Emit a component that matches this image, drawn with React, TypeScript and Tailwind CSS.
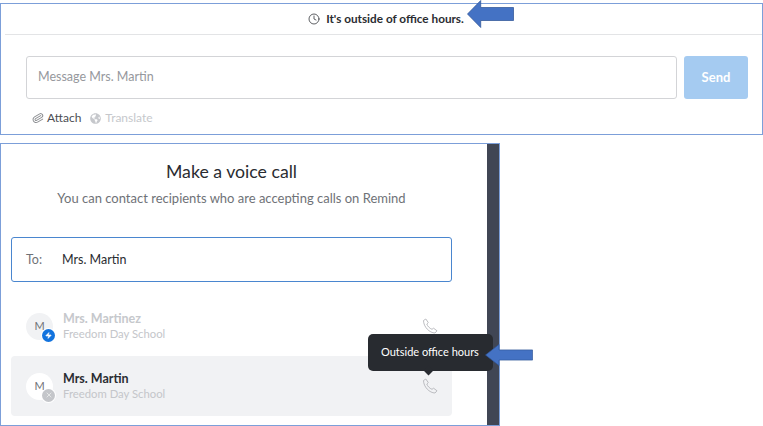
import { Clock, Paperclip, Zap, X } from "lucide-react";
import { FaGlobeAmericas } from "react-icons/fa";

function BlueArrow({ className }: { className: string }) {
  return (
    <svg className={className} viewBox="0 0 48 28" preserveAspectRatio="none" fill="#4472c4" stroke="#2f5597" strokeWidth="0.75">
      <path d="M0.5 14 L14 0.5 V7.5 H47.5 V20.5 H14 V27.5 Z" />
    </svg>
  );
}

function Handset() {
  return (
    <svg width="16" height="16" viewBox="0 0 16 16" fill="none" stroke="#b4b6ba" strokeWidth="0.9" strokeLinejoin="round">
      <path d="M1.5 2.5 L3.8 1 L6.3 4.6 L4.8 6 C5.4 8 7.6 10.4 10 11.3 L11.6 10.2 L15 12.8 L13 15 C7.6 15 1.5 8.8 1.5 2.5 Z" />
    </svg>
  );
}

function Avatar({ online, hovered }: { online?: boolean; hovered?: boolean }) {
  return (
    <div className={`relative flex h-[27px] w-[27px] shrink-0 items-center justify-center rounded-full text-[11px] text-[#6f7277] ${hovered ? "bg-white" : "bg-[#f1f2f4]"}`}>
      M
      {online ? (
        <span className="absolute -right-[2px] -bottom-[2px] flex h-[13px] w-[13px] items-center justify-center rounded-full bg-[#1273de] ring-1 ring-white">
          <Zap size={7} fill="white" stroke="white" />
        </span>
      ) : (
        <span className="absolute -right-[2px] -bottom-[2px] flex h-[13px] w-[13px] items-center justify-center rounded-full bg-[#c4c6ca] ring-1 ring-white">
          <X size={8} stroke="#eceded" strokeWidth={2.5} />
        </span>
      )}
    </div>
  );
}

function Recipient({ name, dim, active }: { name: string; dim?: boolean; active?: boolean }) {
  return (
    <div className={`flex h-[60px] items-center rounded-[4px] pr-[14px] pl-[15px] ${active ? "bg-[#f1f2f4]" : ""}`}>
      <Avatar online={dim} hovered={active} />
      <div className="ml-[10px] flex-1">
        <div className={`text-[12.5px] leading-[16px] font-bold ${dim ? "text-[#c6c8cc]" : "text-[#2a2c31]"}`}>{name}</div>
        <div className="text-[11.3px] leading-[14px] text-[#c4c6ca]">Freedom Day School</div>
      </div>
      <Handset />
    </div>
  );
}

export default function App() {
  return (
    <div className="relative h-[426px] w-[763px] overflow-hidden bg-white pt-[3px] font-['Lato',sans-serif] text-[#2a2c31]">
      <section className="h-[132px] border border-[#7c9fd9]">
        <div className="ml-[4px] flex h-[31px] items-center justify-center gap-[6px] border-b border-[#e3e4e6] pl-[5px] text-[11.75px] font-bold">
          <Clock size={12} strokeWidth={1.5} />
          <span>It's outside of office hours.</span>
        </div>
        <div className="mt-[21px] flex gap-[7px] pr-[14px] pl-[25px]">
          <div className="flex h-[43px] flex-1 items-center rounded-[3px] border border-[#d3d4d7] px-[11px] text-[12.5px] text-[#96989d]">
            Message Mrs. Martin
          </div>
          <div className="flex h-[43px] w-[64px] items-center justify-center rounded-[3px] bg-[#a5cbf1] text-[13px] font-bold text-white">
            Send
          </div>
        </div>
        <div className="mt-[10px] flex items-center pl-[31px] text-[12px]">
          <Paperclip size={12} className="mr-[3px] rotate-[15deg] text-[#8d8f93]" />
          <span className="text-[#4b4d52]">Attach</span>
          <FaGlobeAmericas size={11} className="mr-[4px] ml-[9px] text-[#c6c8cc]" />
          <span className="text-[#c6c8cc]">Translate</span>
        </div>
      </section>

      <section className="mt-[8px] flex h-[283px] w-[500px] border border-r-0 border-[#7c9fd9]">
        <div className="flex-1 pr-[35px] pl-[10px]">
          <h1 className="mt-[18px] text-center text-[17.7px] leading-[20px] font-normal">Make a voice call</h1>
          <p className="mt-[7px] text-center text-[13px] leading-[18px] text-[#6f7277]">
            You can contact recipients who are accepting calls on Remind
          </p>
          <div className="mt-[30px] flex h-[45px] items-center rounded-[3px] border border-[#4a86cf] pt-[1px] pl-[14px] text-[12.5px]">
            <span className="w-[36px] text-[#6f7277]">To:</span>
            <span>Mrs. Martin</span>
          </div>
          <div className="mt-[14px]">
            <Recipient dim name="Mrs. Martinez" />
            <Recipient active name="Mrs. Martin" />
          </div>
        </div>
        <div className="w-[13px] border-r border-[#7c9fd9] bg-[#404654]" />
      </section>

      <BlueArrow className="absolute top-0 left-[467px] h-[28px] w-[47px]" />

      <div className="absolute top-[334px] left-[368px] flex h-[37px] w-[125px] items-center rounded-[5px] bg-[#282b30] pl-[13px] text-[11px] text-white">
        Outside office hours
        <span className="absolute -bottom-[3px] left-[57px] h-[7px] w-[7px] rotate-45 bg-[#282b30]" />
      </div>
      <BlueArrow className="absolute top-[344px] left-[485px] h-[22px] w-[48px]" />
    </div>
  );
}
